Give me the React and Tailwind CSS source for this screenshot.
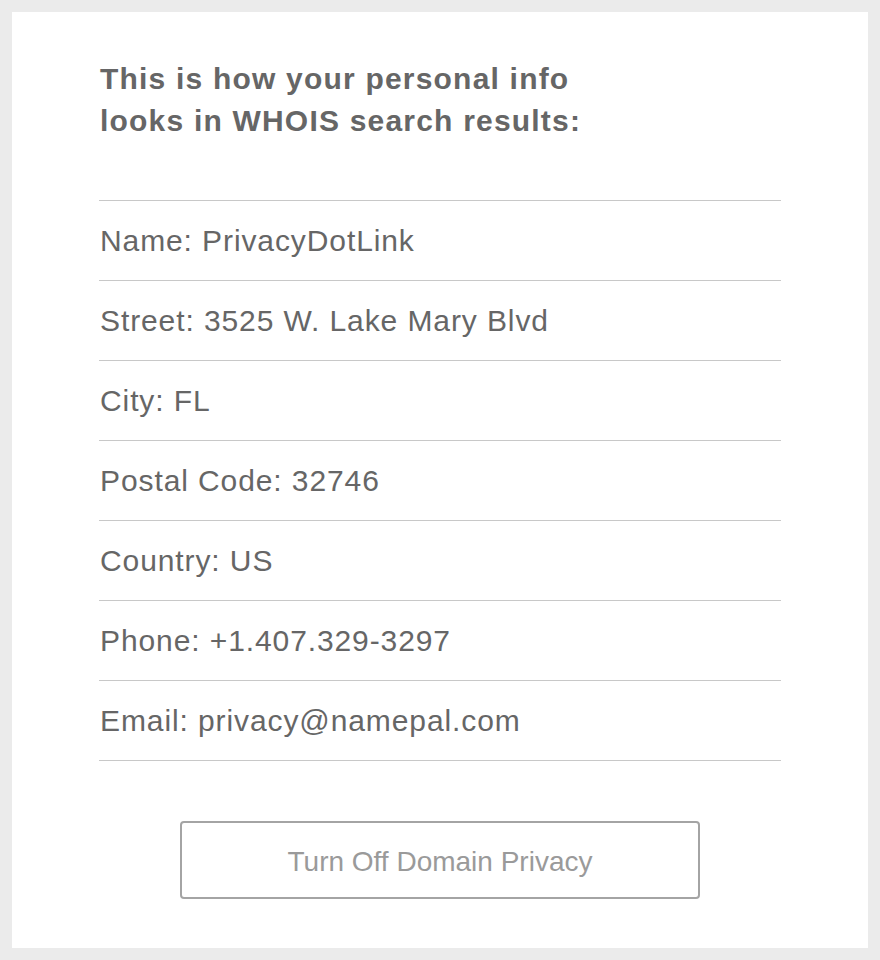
export default function App() {
  const rows = [
    "Name: PrivacyDotLink",
    "Street: 3525 W. Lake Mary Blvd",
    "City: FL",
    "Postal Code: 32746",
    "Country: US",
    "Phone: +1.407.329-3297",
    "Email: privacy@namepal.com",
  ];
  return (
    <div
      className="min-h-[960px] bg-[#ebebeb] p-[12px]"
      style={{ fontFamily: '"Liberation Sans", Arial, sans-serif' }}
    >
      <div className="bg-white h-[936px] px-[87px] pt-[46px]">
        <h1 className="text-[30px] leading-[42px] font-bold text-[#666666] tracking-[1.2px] pl-[1px]">
          This is how your personal info
          <br />
          looks in WHOIS search results:
        </h1>
        <div className="mt-[58px] border-t border-[#c8c8c8]">
          {rows.map((r) => (
            <div
              key={r}
              className="h-[80px] flex items-center border-b border-[#c8c8c8] text-[30px] text-[#666666] tracking-[0.9px] pl-[1px]"
            >
              {r}
            </div>
          ))}
        </div>
        <div className="flex justify-center mt-[60px]">
          <button className="w-[520px] h-[78px] pt-[3px] border-2 border-[#a4a4a4] rounded-[4px] text-[28px] text-[#9a9a9a] bg-white">
            Turn Off Domain Privacy
          </button>
        </div>
      </div>
    </div>
  );
}
